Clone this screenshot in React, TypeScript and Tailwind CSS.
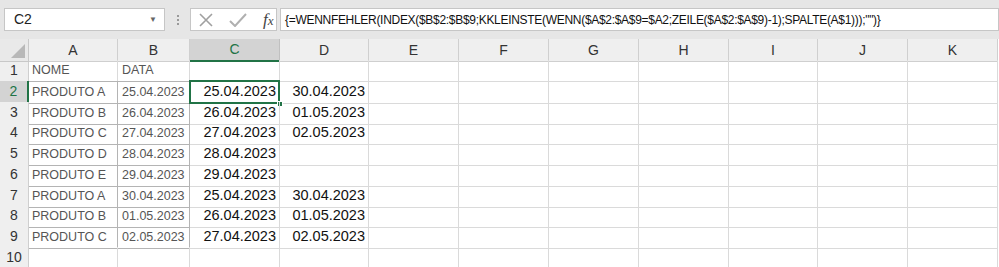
import React from 'react'

const cols = ['A', 'B', 'C', 'D', 'E', 'F', 'G', 'H', 'I', 'J', 'K', 'L']

const rows: { h: string; a: string; b: string; c: string; d: string }[] = [
  { h: 'h-[21px]', a: 'NOME', b: 'DATA', c: '', d: '' },
  { h: 'h-[21px]', a: 'PRODUTO A', b: '25.04.2023', c: '25.04.2023', d: '30.04.2023' },
  { h: 'h-[20px]', a: 'PRODUTO B', b: '26.04.2023', c: '26.04.2023', d: '01.05.2023' },
  { h: 'h-[21px]', a: 'PRODUTO C', b: '27.04.2023', c: '27.04.2023', d: '02.05.2023' },
  { h: 'h-[21px]', a: 'PRODUTO D', b: '28.04.2023', c: '28.04.2023', d: '' },
  { h: 'h-[21px]', a: 'PRODUTO E', b: '29.04.2023', c: '29.04.2023', d: '' },
  { h: 'h-[20px]', a: 'PRODUTO A', b: '30.04.2023', c: '25.04.2023', d: '30.04.2023' },
  { h: 'h-[21px]', a: 'PRODUTO B', b: '01.05.2023', c: '26.04.2023', d: '01.05.2023' },
  { h: 'h-[21px]', a: 'PRODUTO C', b: '02.05.2023', c: '27.04.2023', d: '02.05.2023' },
  { h: 'h-[20px]', a: '', b: '', c: '', d: '' },
]

const gridCols = 'grid grid-cols-[29px_89px_72px_90px_89px_90px_90px_90px_90px_89px_90px_90px]'

const formula = '{=WENNFEHLER(INDEX($B$2:$B$9;KKLEINSTE(WENN($A$2:$A$9=$A2;ZEILE($A$2:$A$9)-1);SPALTE(A$1)));"")}'

function FormulaBar() {
  return (
    <div className="h-[39px] bg-[#e6e6e6] pt-[8px] flex items-start">
      <div className="ml-[4px] w-[161px] h-[23px] bg-white border border-[#c6c6c6] flex items-center justify-between pl-[9px] pr-[7px]">
        <span className="text-[14px] text-[#222]">C2</span>
        <span className="text-[8px] text-[#666]">▼</span>
      </div>
      <div className="w-[25px] h-[23px] flex flex-col items-center justify-center gap-[2px]">
        <span className="w-[2px] h-[2px] bg-[#999]" />
        <span className="w-[2px] h-[2px] bg-[#999]" />
        <span className="w-[2px] h-[2px] bg-[#999]" />
      </div>
      <div className="w-[87px] h-[23px] bg-white border border-[#c6c6c6] flex items-center pl-[8px] gap-[12px]">
        <svg width="14" height="14" viewBox="0 0 14 14">
          <path d="M1 1 L13 13 M13 1 L1 13" stroke="#a0a0a0" strokeWidth="1.6" fill="none" />
        </svg>
        <svg width="18" height="14" viewBox="0 0 18 14" className="ml-[4px]">
          <path d="M1 8 L6 13 L17 1" stroke="#b0b0b0" strokeWidth="2" fill="none" />
        </svg>
        <span className="ml-[4px] font-['Liberation_Serif',serif] italic text-[17px] text-[#444] leading-none">
          f<span className="text-[13px]">x</span>
        </span>
      </div>
      <div className="ml-[3px] flex-1 h-[23px] bg-white border border-[#c6c6c6] flex items-center pl-[4px] overflow-hidden">
        <span className="text-[12px] text-[#111] whitespace-nowrap tracking-[-0.3px]">{formula}</span>
      </div>
    </div>
  )
}

function HeaderRow() {
  return (
    <div className={`${gridCols} h-[21px]`}>
      <div className="bg-[#e9e9e9] border-r border-b border-[#c8c8c8] relative">
        <div className="absolute right-[3px] bottom-[3px] w-0 h-0 border-l-[14px] border-l-transparent border-b-[14px] border-b-[#b8b8b8]" />
      </div>
      {cols.map((c) =>
        c === 'C' ? (
          <div
            key={c}
            className="bg-[#d3d3d3] border-r border-[#c0c0c0] border-b-2 border-b-[#217346] flex items-center justify-center text-[14px] text-[#217346]"
          >
            {c}
          </div>
        ) : (
          <div
            key={c}
            className="bg-[#efefef] border-r border-b border-[#cfcfcf] flex items-center justify-center text-[14px] text-[#333]"
          >
            {c}
          </div>
        )
      )}
    </div>
  )
}

function App() {
  return (
    <div className="w-[999px] h-[267px] overflow-hidden bg-white font-['Liberation_Sans',Arial,sans-serif]">
      <FormulaBar />
      <HeaderRow />
      {rows.map((r, i) => {
        const n = i + 1
        const sel = n === 2
        const edge = n >= 1 && n <= 9
        const abCls = edge
          ? n === 1
            ? 'border-r border-r-[#dadada] border-b border-b-[#b4b4b4]'
            : 'border-r border-b border-[#b4b4b4]'
          : 'border-r border-b border-[#dadada]'
        return (
          <div key={n} className={`${gridCols} ${r.h}`}>
            {sel ? (
              <div className="bg-[#d3d3d3] border-b border-[#c0c0c0] border-r-2 border-r-[#217346] flex items-center justify-center text-[14px] text-[#217346]">
                {n}
              </div>
            ) : (
              <div className="bg-[#efefef] border-r border-b border-[#cfcfcf] flex items-center justify-center text-[14px] text-[#333]">
                {n}
              </div>
            )}
            <div className={`${abCls} flex items-center pl-[3px] text-[12.5px] text-[#555] whitespace-nowrap overflow-hidden`}>
              {r.a}
            </div>
            <div className={`${abCls} flex items-center pl-[4px] text-[12.5px] text-[#555] whitespace-nowrap overflow-hidden`}>
              {r.b}
            </div>
            <div className="relative border-r border-b border-[#dadada] flex items-center justify-end pr-[3px] text-[14.5px] text-[#111]">
              {r.c}
              {sel && (
                <>
                  <span className="absolute -left-px -top-px -right-px -bottom-px border-2 border-[#217346]" />
                  <span className="absolute -right-[4px] -bottom-[4px] w-[6px] h-[6px] bg-[#217346] border border-white" />
                </>
              )}
            </div>
            <div className="border-r border-b border-[#dadada] flex items-center justify-end pr-[3px] text-[14.5px] text-[#111]">
              {r.d}
            </div>
            {cols.slice(4).map((c) => (
              <div key={c} className="border-r border-b border-[#dadada]" />
            ))}
          </div>
        )
      })}
    </div>
  )
}

export default App
